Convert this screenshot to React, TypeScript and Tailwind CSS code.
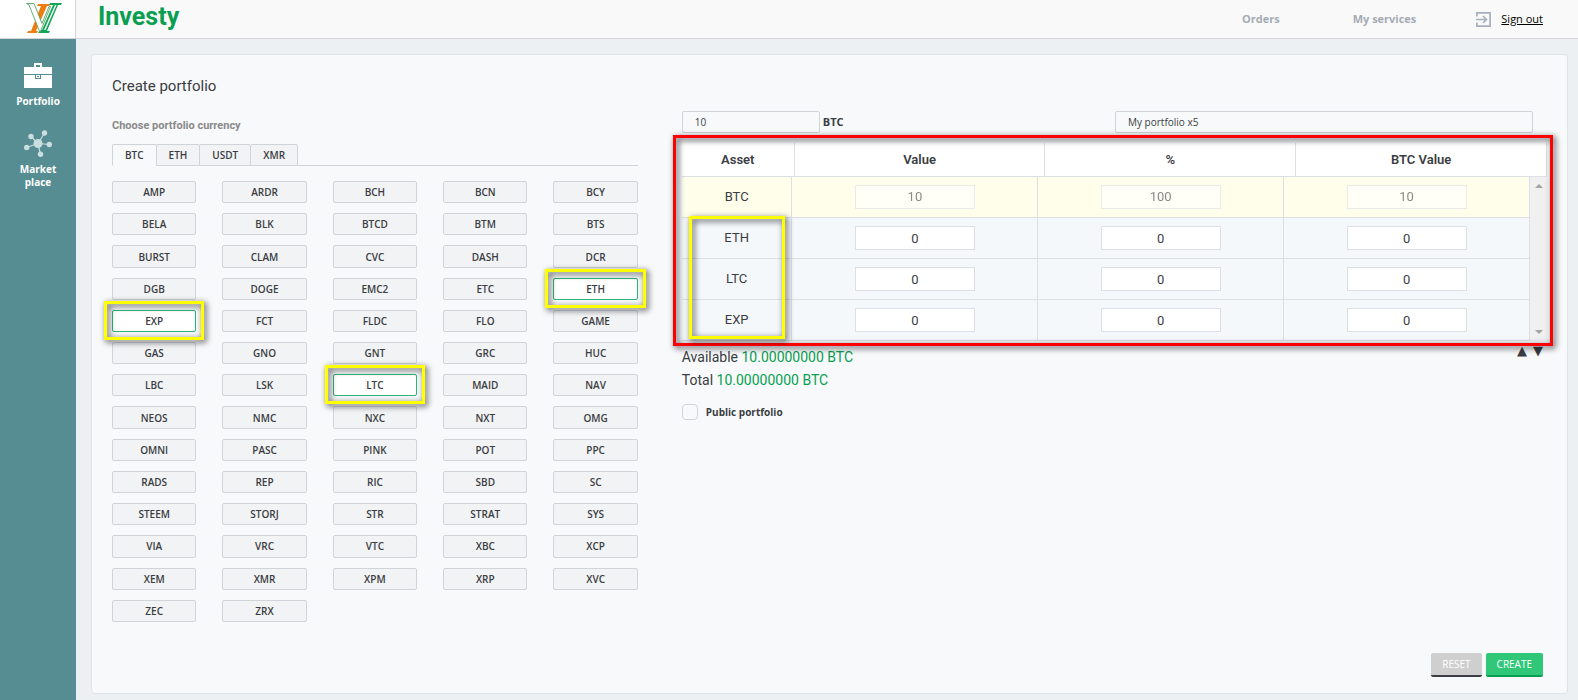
import React, { useState } from "react"

const CURRENCIES = [
  "AMP", "ARDR", "BCH", "BCN", "BCY",
  "BELA", "BLK", "BTCD", "BTM", "BTS",
  "BURST", "CLAM", "CVC", "DASH", "DCR",
  "DGB", "DOGE", "EMC2", "ETC", "ETH",
  "EXP", "FCT", "FLDC", "FLO", "GAME",
  "GAS", "GNO", "GNT", "GRC", "HUC",
  "LBC", "LSK", "LTC", "MAID", "NAV",
  "NEOS", "NMC", "NXC", "NXT", "OMG",
  "OMNI", "PASC", "PINK", "POT", "PPC",
  "RADS", "REP", "RIC", "SBD", "SC",
  "STEEM", "STORJ", "STR", "STRAT", "SYS",
  "VIA", "VRC", "VTC", "XBC", "XCP",
  "XEM", "XMR", "XPM", "XRP", "XVC",
  "ZEC", "ZRX",
]

const TABS = ["BTC", "ETH", "USDT", "XMR"]
const COLUMNS = ["Value", "%", "BTC Value"]

function Logo() {
  return (
    <svg width="38" height="34" viewBox="0 0 38 34" aria-hidden="true">
      <path d="M13 2h12l-1 2h-2L11 29h2l-1 2H2l1-2h3L16 4h-4z" fill="#ee7d11" />
      <path d="M25 1h12l-1 2h-3L22 29h3l-1 2H13l2-3h2L28 3h-4z" fill="#14a558" />
      <path d="M30 3h1.500L20.500 28H19z" fill="#fff" />
      <path d="M1.500 1.500H9l8 20 7-17h1.500L15 30.500 4 3z" fill="#fff" stroke="#3f9c55" strokeWidth="0.8" />
    </svg>
  )
}

function BriefcaseIcon() {
  return (
    <svg width="28" height="25" viewBox="0 0 28 25" fill="#fff" aria-hidden="true">
      <path fillRule="evenodd" d="M10 0h8v4h10v7H0V4h10zM12 2v2h4V2z" />
      <path fillRule="evenodd" d="M0 12h11v4h6v-4h11v13H0z" />
      <path fillRule="evenodd" d="M12 12h4v3h-4zM13 13v1h2v-1z" />
    </svg>
  )
}

function NetworkIcon() {
  return (
    <svg width="28" height="27" viewBox="0 0 28 27" fill="#ccdddf" stroke="#ccdddf" aria-hidden="true">
      <path d="M14 13.500 20.500 3M14 13.500 7 6.500M14 13.500 2.500 17.500M14 13.500 25.500 14.500M14 13.500 16.500 24.500" strokeWidth="1.200" />
      <g stroke="none">
        <circle cx="14" cy="13.500" r="4.500" />
        <circle cx="20.500" cy="3" r="2.700" />
        <circle cx="7" cy="6.500" r="2.700" />
        <circle cx="2.700" cy="17.500" r="2.700" />
        <circle cx="25.300" cy="14.500" r="2.700" />
        <circle cx="16.500" cy="24.300" r="2.700" />
      </g>
    </svg>
  )
}

function SignOutIcon() {
  return (
    <svg width="15" height="15" viewBox="0 0 15 15" fill="none" stroke="#a9b0bd" strokeWidth="1.700" aria-hidden="true">
      <path d="M.9 4.500V.9h13.200v13.200H.9v-3.600M0 7.500h10M7 4l3.500 3.500L7 11" />
    </svg>
  )
}

// Yellow frame around a picked item
function Marker({ className }: { className: string }) {
  return (
    <span
      className={`pointer-events-none absolute z-10 border-3 border-[#ffff00] drop-shadow-[2px_2px_3px_rgba(0,0,0,0.8)] ${className}`}
    />
  )
}

function CurrencyPicker({ selected }: { selected: string[] }) {
  const [tab, setTab] = useState("BTC")

  return (
    <section>
      <h2 className="mt-[21px] text-[11px] leading-4 font-bold text-[#8a8a8a] font-['Roboto',sans-serif]">
        Choose portfolio currency
      </h2>

      <div className="mt-2.5 flex border-b border-[#d0d4d9]">
        {TABS.map((name) => (
          <button
            key={name}
            type="button"
            onClick={() => setTab(name)}
            className={`-mb-px -mr-px h-[22px] rounded-t-xs border border-[#d0d4d9] px-3 text-[10px] font-semibold ${
              tab === name ? "border-b-[#f8f9fb] bg-[#f8f9fb]" : "bg-[#f2f3f5]"
            }`}
          >
            {name}
          </button>
        ))}
      </div>

      <div className="mt-[15px] grid min-h-[441px] grid-cols-5 gap-x-[26px] gap-y-2.5">
        {CURRENCIES.map((name) => {
          const active = selected.includes(name)
          return (
            <div key={name} className="relative flex">
              <button
                type="button"
                className={`flex-1 rounded-xs border text-[10px] leading-5 font-semibold ${
                  active ? "border-[#2bb673] bg-white" : "border-[#d0d4d9] bg-[#f2f3f5]"
                }`}
              >
                {name}
              </button>
              {active && <Marker className="-inset-x-2 -top-[9px] -bottom-2" />}
            </div>
          )
        })}
      </div>
    </section>
  )
}

function AssetTable({ assets }: { assets: string[] }) {
  return (
    <div className="relative mt-2.5 font-['Roboto',sans-serif]">
      <table className="w-full table-fixed border-collapse bg-white text-[13px]">
        <thead>
          <tr className="h-[33px] border-b border-[#dce0e6]">
            <th className="w-[13%] border-r border-[#dce0e6] font-semibold">Asset</th>
            {COLUMNS.map((name) => (
              <th key={name} className="border-r border-[#dce0e6] font-semibold">{name}</th>
            ))}
          </tr>
        </thead>
      </table>

      <div className="flex">
        <table className="flex-1 table-fixed border-collapse text-[13px]">
          <tbody>
            {assets.map((name, i) => (
              <tr
                key={name}
                className={`h-[41px] border-b border-[#dce0e6] ${i === 0 ? "bg-[#fffeeb]" : "bg-[#f4f8fb]"}`}
              >
                <td className="w-[13%] border-r border-[#dce0e6] text-center">{name}</td>
                {COLUMNS.map((col) => (
                  <td key={col} className="w-[29%] border-r border-[#dce0e6] text-center">
                    <input
                      aria-label={`${name} ${col}`}
                      disabled={i === 0}
                      defaultValue={i > 0 ? "0" : col === "%" ? "100" : "10"}
                      className="mx-auto block h-6 w-[120px] border border-[#dce0e6] bg-white text-center disabled:opacity-60"
                    />
                  </td>
                ))}
              </tr>
            ))}
          </tbody>
        </table>
        <div className="flex w-[17px] flex-col items-center justify-between bg-[#f0f0f0] py-[7px]">
          <svg width="8" height="4" viewBox="0 0 8 4" fill="#a3a3a3"><path d="M4 0l4 4H0z" /></svg>
          <svg width="8" height="4" viewBox="0 0 8 4" fill="#a3a3a3"><path d="M4 4l4-4H0z" /></svg>
        </div>
      </div>

      <Marker className="top-[73px] bottom-0.5 left-[7px] w-24" />
      <span className="pointer-events-none absolute -top-2 -right-1.5 -bottom-[5px] -left-[9px] border-3 border-[#ff0000] drop-shadow-[2px_2px_3px_rgba(0,0,0,0.8)]" />
    </div>
  )
}

export default function App() {
  return (
    <div className="flex min-h-screen bg-[#ecf0f3] text-[#3a3d42] font-['Open_Sans',sans-serif]">
      <aside className="flex w-[76px] shrink-0 flex-col bg-[#558d92] text-center text-white">
        <a href="#" aria-label="Home" className="flex h-[39px] justify-center border-r border-b border-[#d5d5d9] bg-white pt-0.5 pl-3">
          <Logo />
        </a>
        <nav className="flex flex-col text-[10px] leading-[13px] font-bold">
          <a href="#" className="mt-6 flex flex-col items-center gap-[7px]">
            <BriefcaseIcon />
            Portfolio
          </a>
          <a href="#" className="mt-[22px] flex flex-col items-center gap-1.5">
            <NetworkIcon />
            <span className="w-10">Market place</span>
          </a>
        </nav>
      </aside>

      <div className="flex flex-1 flex-col">
        <header className="flex h-[39px] items-center border-b border-[#d5d5d9] bg-[#f9f9f9] pr-[35px] pl-[22px] text-[11px]">
          <h1 className="mb-1 flex-1 text-[25px] leading-6 font-bold text-[#0a9f50] font-['Roboto',sans-serif]">Investy</h1>
          <a href="#" className="font-bold text-[#a5abb5]">Orders</a>
          <a href="#" className="ml-[73px] font-bold text-[#a5abb5]">My services</a>
          <a href="#" className="ml-[60px] flex items-center gap-2.5 text-black">
            <SignOutIcon />
            <span className="underline">Sign out</span>
          </a>
        </header>

        <main className="flex flex-1 pt-[15px] pr-2.5 pb-1.5 pl-[15px]">
          <form
            onSubmit={(e) => e.preventDefault()}
            className="flex flex-1 flex-col rounded-sm border border-[#e0e3e7] bg-[#f8f9fb] px-5 pt-5 pb-4"
          >
            <div className="grid grid-cols-[378fr_622fr] gap-x-11">
              <div>
                <h2 className="text-[15px] leading-[22px] font-['Roboto',sans-serif]">Create portfolio</h2>
                <CurrencyPicker selected={["ETH", "EXP", "LTC"]} />
              </div>

              <section className="pt-9">
                <div className="flex items-center pr-3.5 text-[10px]">
                  <input
                    id="amount"
                    defaultValue="10"
                    className="h-[22px] w-[138px] rounded-xs border border-[#d0d4d9] px-3"
                  />
                  <label htmlFor="amount" className="ml-[3px] text-[11px] leading-5 font-bold">BTC</label>
                  <input
                    aria-label="Portfolio name"
                    defaultValue="My portfolio x5"
                    className="ml-auto h-[22px] w-[418px] rounded-xs border border-[#d0d4d9] px-3"
                  />
                </div>

                <AssetTable assets={["BTC", "ETH", "LTC", "EXP"]} />

                <div className="flex justify-between font-['Roboto',sans-serif]">
                  <div className="pt-[5px] text-[14px] leading-[23px]">
                    <p>Available <span className="text-[#0a9f50]">10.00000000 BTC</span></p>
                    <p>Total <span className="text-[#0a9f50]">10.00000000 BTC</span></p>
                  </div>
                  <div className="flex h-5 gap-1.5 pr-1 text-[13px] leading-5 font-['DejaVu_Sans',sans-serif]">
                    <button type="button" aria-label="Move up">▲</button>
                    <button type="button" aria-label="Move down">▼</button>
                  </div>
                </div>

                <label className="mt-3 flex items-center gap-2 text-[10px] leading-4 font-bold">
                  <input type="checkbox" className="size-4 appearance-none rounded-sm border border-[#d0d4d9]" />
                  Public portfolio
                </label>
              </section>
            </div>

            <div className="mt-auto flex justify-end gap-1 pr-1 text-[10px] font-medium text-white">
              <button type="reset" className="h-6 rounded-xs border-b-2 border-[#3a3d42] bg-[#cfcfcf] px-[11px]">RESET</button>
              <button type="submit" className="h-6 rounded-xs border-b-2 border-[#0a9f50] bg-[#30c779] px-[11px]">CREATE</button>
            </div>
          </form>
        </main>
      </div>
    </div>
  )
}
